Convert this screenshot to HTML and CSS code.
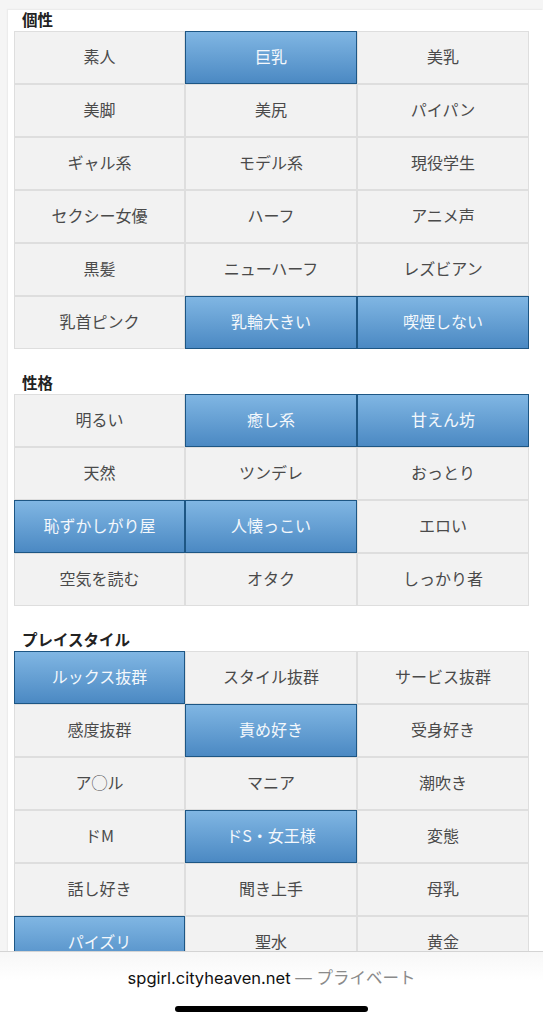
FILE: index.html
```html
<!DOCTYPE html>
<html lang="ja">
<head>
    <meta charset="UTF-8">
    <title>プロフィール</title>
    <link rel="stylesheet" href="styles.css">
</head>
<body>
    <div id="wrap">
        <section class="tags">
            <h2>個性</h2>
            <ul class="grid">
                <li>素人</li>
                <li class="on">巨乳</li>
                <li>美乳</li>
                <li>美脚</li>
                <li>美尻</li>
                <li>パイパン</li>
                <li>ギャル系</li>
                <li>モデル系</li>
                <li>現役学生</li>
                <li>セクシー女優</li>
                <li>ハーフ</li>
                <li>アニメ声</li>
                <li>黒髪</li>
                <li>ニューハーフ</li>
                <li>レズビアン</li>
                <li>乳首ピンク</li>
                <li class="on">乳輪大きい</li>
                <li class="on">喫煙しない</li>
            </ul>
        </section>

        <section class="tags">
            <h2>性格</h2>
            <ul class="grid">
                <li>明るい</li>
                <li class="on">癒し系</li>
                <li class="on">甘えん坊</li>
                <li>天然</li>
                <li>ツンデレ</li>
                <li>おっとり</li>
                <li class="on">恥ずかしがり屋</li>
                <li class="on">人懐っこい</li>
                <li>エロい</li>
                <li>空気を読む</li>
                <li>オタク</li>
                <li>しっかり者</li>
            </ul>
        </section>

        <section class="tags">
            <h2>プレイスタイル</h2>
            <ul class="grid">
                <li class="on">ルックス抜群</li>
                <li>スタイル抜群</li>
                <li>サービス抜群</li>
                <li>感度抜群</li>
                <li class="on">責め好き</li>
                <li>受身好き</li>
                <li>ア◯ル</li>
                <li>マニア</li>
                <li>潮吹き</li>
                <li>ドM</li>
                <li class="on">ドS・女王様</li>
                <li>変態</li>
                <li>話し好き</li>
                <li>聞き上手</li>
                <li>母乳</li>
                <li class="on">パイズリ</li>
                <li>聖水</li>
                <li>黄金</li>
            </ul>
        </section>
    </div>

    <!-- ブラウザ下部バー -->
    <div class="safari">
        <p class="url">spgirl.cityheaven.net <span>— プライベート</span></p>
        <div class="home"></div>
    </div>
</body>
</html>
```

FILE: styles.css
```css
*{
    margin: 0;
    padding: 0;
    box-sizing: border-box;
}

html, body{
    height: 1024px;
    overflow: hidden;
}

body{
    background: #f5f5f5;
    font-family: "Noto Sans CJK JP", "Noto Sans", sans-serif;
    color: #444;
}

#wrap{
    margin: 10px 0 0 8px;
    padding: 0 14px 40px 6px;
    background: #fff;
    min-height: 1014px;
    box-shadow: -1px -1px 1px #ececec;
}

.tags h2{
    height: 21px;
    padding-left: 8px;
    font-size: 15.5px;
    line-height: 18px;
    font-weight: bold;
    color: #222;
}

.tags + .tags{
    margin-top: 24px;
}

.grid{
    display: grid;
    grid-template-columns: 171px 172px 172px;
    list-style: none;
}

.grid li{
    display: flex;
    justify-content: center;
    align-items: center;
    height: 53px;
    padding-bottom: 3px;
    border: 1px solid #dedede;
    background: #f2f2f2;
    font-size: 16px;
    line-height: 1;
    color: #4a4a4a;
}

.grid li.on{
    border-color: #1d5684;
    background: linear-gradient(#80b6e3, #4b89c3);
    color: #f4f8fc;
}

.safari{
    position: fixed;
    left: 0;
    bottom: 0;
    width: 100%;
    height: 73px;
    border-top: 1px solid #d4d4d4;
    background: linear-gradient(#f7f7f7, #fff 40%);
    text-align: center;
}

.url{
    margin-top: 16px;
    font-family: "Inter", "Noto Sans CJK JP", sans-serif;
    font-size: 16.5px;
    line-height: 20px;
    color: #111;
}

.url span{
    color: #8a8a8a;
}

.home{
    width: 193px;
    height: 6px;
    margin: 18px auto 0;
    border-radius: 3px;
    background: #000;
}
```
